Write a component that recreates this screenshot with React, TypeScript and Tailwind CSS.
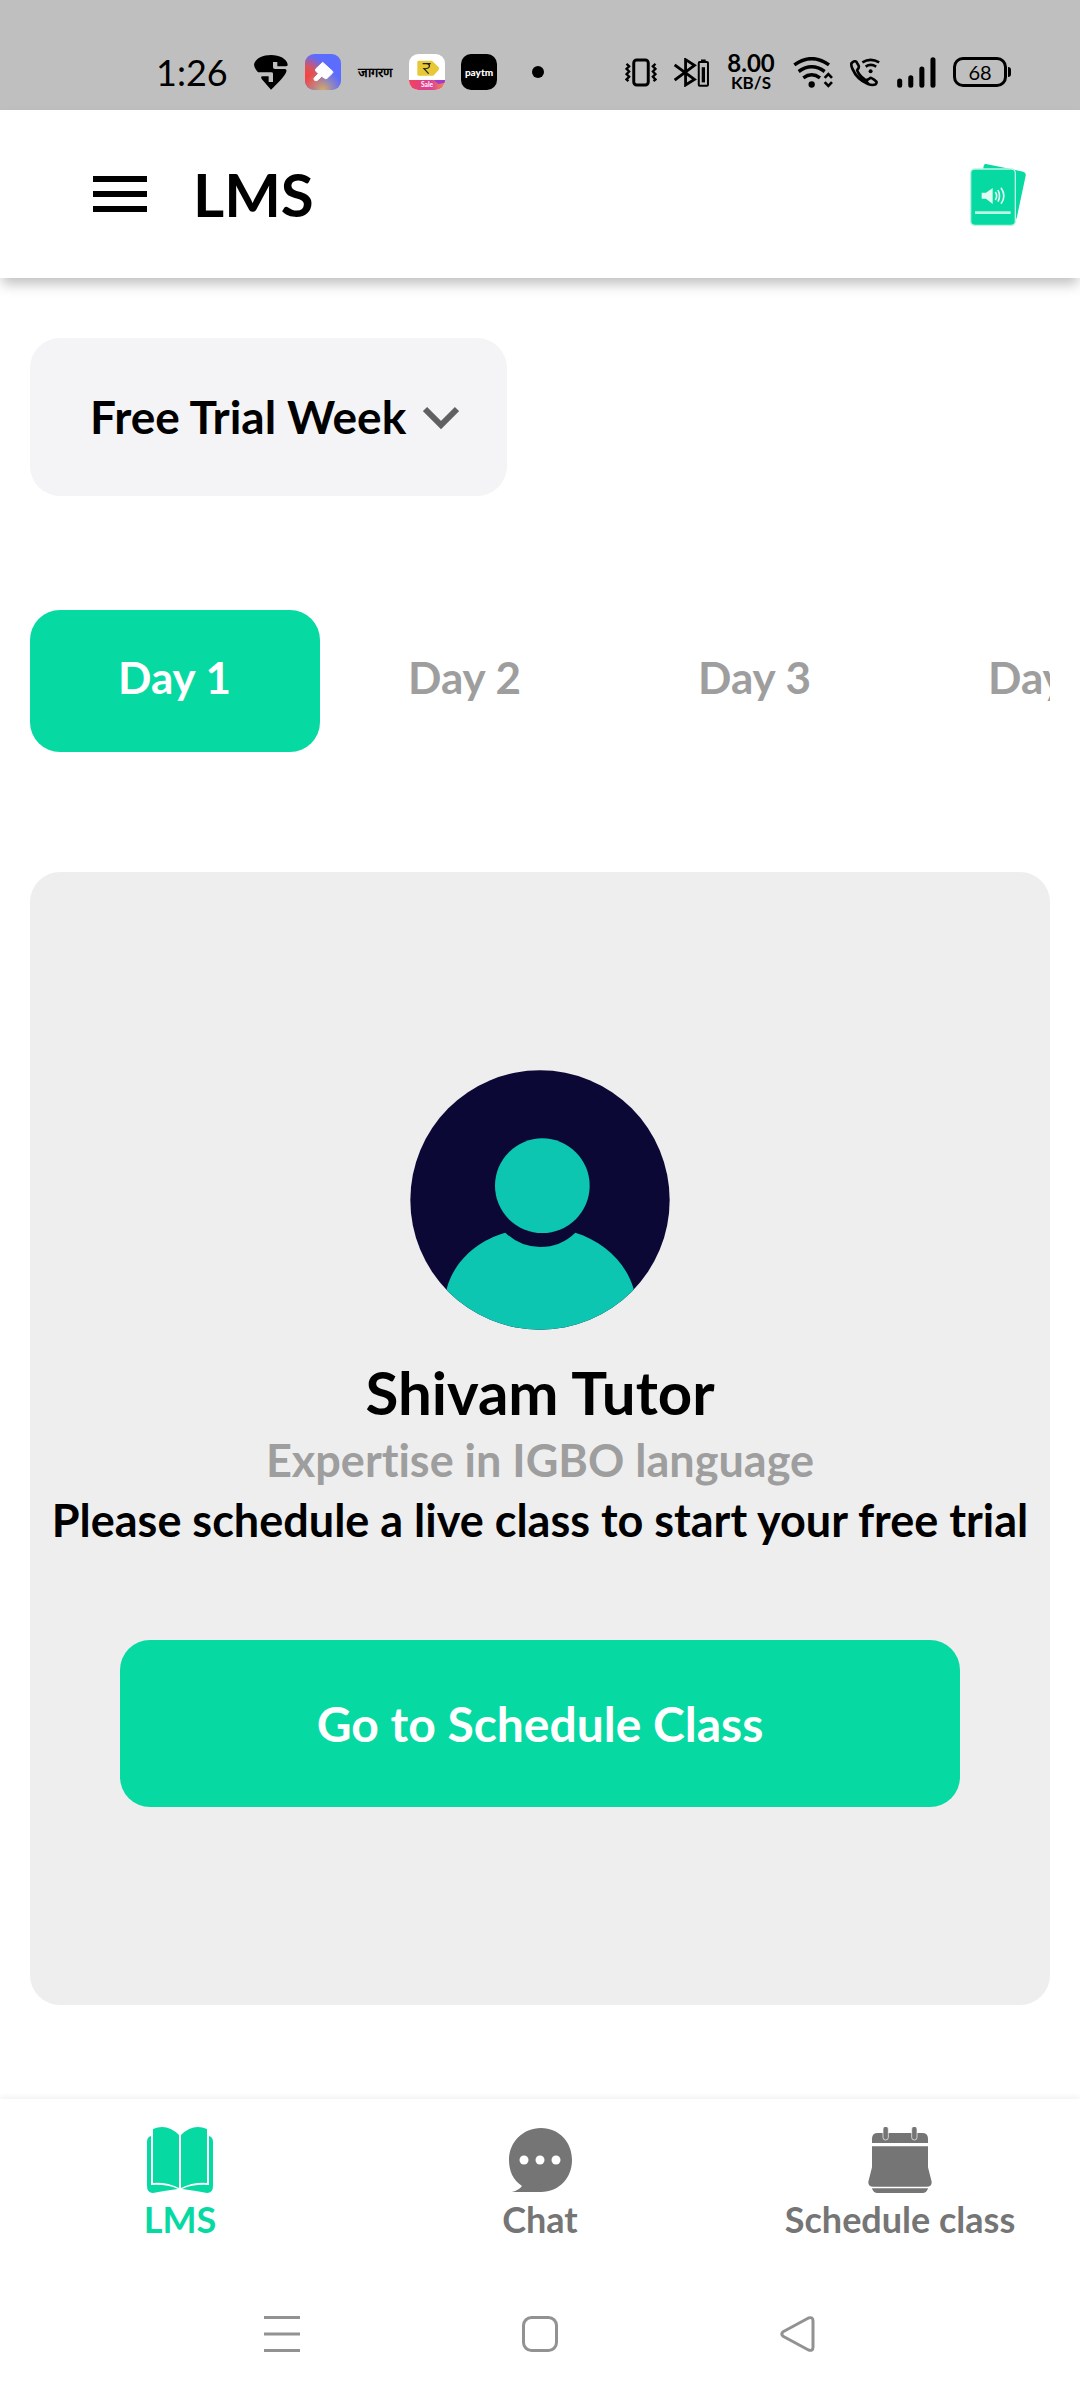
import React from "react";

function SwiggyIcon() {
  return (
    <svg viewBox="339 72 108 108" className="size-9" aria-hidden="true">
      <path d="M393 179 L365 147 Q361 139 367 139 H386 V156 H399 V131 Q399 127 394 127 H354 Q342 114 342 103 C347 84 370 75 393 75 C419 75 440 86 443 103 Q444 109 438 109 H412 V96 H399 V112 Q399 117 405 117 H434 Q441 118 439 125 C432 142 412 160 393 179Z" fill="#000" />
    </svg>
  );
}

function BrushIcon() {
  return (
    <svg viewBox="495 72 108 108" className="size-9" aria-hidden="true">
      <defs>
        <radialGradient id="brush-red" cx="0" cy="0.62" r="0.62">
          <stop offset="0" stopColor="#ff3d3d" />
          <stop offset="0.45" stopColor="#f0503f" stopOpacity="0.85" />
          <stop offset="1" stopColor="#f0503f" stopOpacity="0" />
        </radialGradient>
        <radialGradient id="brush-gold" cx="0.5" cy="1" r="0.55">
          <stop offset="0" stopColor="#d8ac62" />
          <stop offset="1" stopColor="#c59a80" stopOpacity="0" />
        </radialGradient>
      </defs>
      <rect x="495" y="72" width="108" height="108" rx="28" fill="#5b6cff" />
      <rect x="495" y="72" width="108" height="108" rx="28" fill="url(#brush-red)" />
      <rect x="495" y="72" width="108" height="108" rx="28" fill="url(#brush-gold)" />
      <path d="M548 97 L578 124 Q580 127 577 130 L561 145 Q557 148 553 144 L545 139 L532 151 Q526 154 522 149 Q521 146 523 143 L535 131 L528 124 Q525 120 528 116Z" fill="#fff" stroke="#fff" strokeWidth="3" strokeLinejoin="round" />
    </svg>
  );
}

function OfferIcon() {
  return (
    <svg viewBox="807 72 108 108" className="size-9" aria-hidden="true">
      <defs>
        <clipPath id="offer-clip"><rect x="807" y="72" width="108" height="108" rx="28" /></clipPath>
        <linearGradient id="offer-band" x1="0" x2="1">
          <stop offset="0" stopColor="#f0435c" />
          <stop offset="0.6" stopColor="#d8409a" />
          <stop offset="1" stopColor="#f58a4a" />
        </linearGradient>
      </defs>
      <g clipPath="url(#offer-clip)">
        <rect x="807" y="72" width="108" height="108" fill="#fff" />
        <path d="M836 92 H876 L896 112 Q898 116 896 120 L880 137 H836 Q832 137 832 133 V96 Q832 92 836 92Z" fill="#e6c838" />
        <path d="M848 101 H872 M862 101 Q870 104 868 110 Q866 117 852 116 L866 131" fill="none" stroke="#222" strokeWidth="3.5" />
        <rect x="807" y="150" width="108" height="30" fill="url(#offer-band)" />
        <path d="M882 150 h33 v8 l-20 4z" fill="#a03bd0" />
        <text x="861" y="171" textAnchor="middle" fontSize="20" fontWeight="700" fill="#fff" fontFamily="Lato, sans-serif">Sale</text>
      </g>
    </svg>
  );
}

function VibrateIcon() {
  return (
    <svg viewBox="80 82 96 88" className="h-[29px] w-8" fill="none" stroke="#000" aria-hidden="true">
      <rect x="106" y="88" width="44" height="76" rx="9" strokeWidth="9" />
      <path d="M84 100 l8 7 l-8 8 l8 8 l-8 8 l8 8 l-8 8 l6 5 M172 100 l-8 7 l8 8 l-8 8 l8 8 l-8 8 l8 8 l-6 5" strokeWidth="7" />
    </svg>
  );
}

function BluetoothIcon() {
  return (
    <svg viewBox="228 82 106 88" className="h-[29px] w-[35px]" fill="none" stroke="#000" aria-hidden="true">
      <path d="M230 103 L290 147 L263 164 V87 L290 104 L230 149" strokeWidth="8.5" />
      <rect x="303" y="94" width="28" height="72" rx="3" strokeWidth="6" />
      <path d="M310 90 h14" strokeWidth="7" />
      <path d="M317 110 v46" strokeWidth="10" />
    </svg>
  );
}

function WifiIcon() {
  return (
    <svg viewBox="586 80 120 92" className="h-[31px] w-10" fill="none" stroke="#000" aria-hidden="true">
      <path d="M590 103 Q642 66 694 103 M603 123 Q642 95 681 123 M617 142 Q642 124 667 142" strokeWidth="10.5" />
      <circle cx="642" cy="162" r="9.5" fill="#000" stroke="none" />
      <path d="M681 142 L692 131 L703 142 M681 155 L692 166 L703 155" strokeWidth="8" />
    </svg>
  );
}

function WifiCallIcon() {
  return (
    <svg viewBox="750 84 90 88" className="h-[29px] w-[30px]" fill="none" stroke="#000" aria-hidden="true">
      <path d="M754 100 Q764 90 769 96 L776 108 Q778 113 771 121 Q777 137 794 149 L801 151 L812 144 Q817 145 829 155 Q832 158 827 164 Q818 168 804 163 Q770 148 757 117 Q752 106 754 100Z M794 149 L806 163" strokeWidth="8" strokeLinejoin="round" />
      <path d="M787 97 Q812 82 838 97 M797 110 Q812 100 829 110" strokeWidth="8" />
      <circle cx="812" cy="124" r="6" fill="#000" stroke="none" />
    </svg>
  );
}

function SignalIcon() {
  return (
    <svg viewBox="890 80 116 92" className="h-[31px] w-[39px]" stroke="#000" strokeWidth="15" strokeLinecap="round" aria-hidden="true">
      <path d="M898 151 V164 M931 142 V164 M964 116 V164 M997 88 V164" />
    </svg>
  );
}

function StatusBar() {
  return (
    <header className="flex h-[110px] items-center justify-between bg-[#bfbfbf] pt-[34px] pr-[69px] pl-[156px] text-black">
      <div className="flex h-9 items-center gap-4">
        <time className="w-[81px] text-[36px] leading-9">1:26</time>
        <SwiggyIcon />
        <BrushIcon />
        <span lang="hi" className="flex w-9 justify-center text-[13px] leading-9 font-black">जागरण</span>
        <OfferIcon />
        <span className="flex size-9 items-center justify-center rounded-[10px] bg-black text-[10px] leading-3 font-black text-white">paytm</span>
        <span className="ml-[19px] size-3 rounded-full bg-black" />
      </div>
      <div className="flex h-9 items-center gap-[17px]">
        <VibrateIcon />
        <BluetoothIcon />
        <div className="flex w-[50px] flex-col items-center font-bold">
          <span className="text-[24px] leading-[21px]">8.00</span>
          <span className="text-[17px] leading-[19px]">KB/S</span>
        </div>
        <WifiIcon />
        <WifiCallIcon />
        <SignalIcon />
        <div className="flex items-center">
          <span className="flex h-[30px] w-[54px] items-center justify-center rounded-[10px] border-[3px] border-black text-[20px] leading-6">68</span>
          <span className="ml-px h-[10px] w-[3px] rounded-r bg-black" />
        </div>
      </div>
    </header>
  );
}

function AudioCardsIcon() {
  return (
    <svg viewBox="92 66 171 189" className="h-[63px] w-[57px]" aria-hidden="true">
      <path d="M140 69 L252 92 Q261 95 259 104 L231 236 L214 84 L132 84 Q132 68 140 69Z" fill="#07d9a2" />
      <rect x="94" y="84" width="134" height="169" rx="12" fill="#07d9a2" stroke="#b8f5e2" strokeWidth="4" />
      <path d="M127 155 h13 l20 -14 v48 l-20 -16 h-13z" fill="#dffbf2" />
      <path d="M168 153 Q176 165 168 177 M176 147 Q185 165 176 182 M185 140 Q202 165 185 188" fill="none" stroke="#dffbf2" strokeWidth="5" />
      <path d="M107 215 H214" stroke="#b8f5e2" strokeWidth="8" />
    </svg>
  );
}

function AppBar() {
  return (
    <div className="flex h-[168px] items-center bg-white pr-[53px] pl-[93px] shadow-[0_8px_12px_-2px_rgba(0,0,0,0.25)]">
      <button type="button" aria-label="Open menu" className="flex w-[54px] flex-col gap-[9px]">
        <span className="h-[6px] w-full bg-black" />
        <span className="h-[6px] w-full bg-black" />
        <span className="h-[6px] w-full bg-black" />
      </button>
      <h1 className="ml-[46px] text-[60px] leading-[76px] font-bold">LMS</h1>
      <button type="button" aria-label="Audio flashcards" className="ml-auto">
        <AudioCardsIcon />
      </button>
    </div>
  );
}

function WeekSelect() {
  return (
    <div className="relative self-start">
      <select aria-label="Week" className="h-[158px] w-[477px] appearance-none rounded-[30px] bg-[#f4f4f6] pr-[80px] pl-[60px] text-[46px] leading-[60px] font-bold text-black">
        <option>Free Trial Week</option>
      </select>
      <svg viewBox="0 0 36 24" className="pointer-events-none absolute top-[68px] right-[48px] h-6 w-9" fill="none" stroke="#606062" strokeWidth="6" aria-hidden="true">
        <path d="M2 3 L18 19 L34 3" />
      </svg>
    </div>
  );
}

const days = ["Day 1", "Day 2", "Day 3", "Day 4"];

function DayTabs() {
  return (
    <div role="tablist" className="mt-[114px] flex overflow-hidden">
      {days.map((day, i) => (
        <button
          key={day}
          type="button"
          role="tab"
          aria-selected={i === 0}
          className={
            i === 0
              ? "h-[142px] w-[290px] shrink-0 rounded-[30px] bg-[#07d9a2] pb-2 pl-[88px] text-left text-[44px] leading-[60px] font-bold text-white"
              : "h-[142px] w-[290px] shrink-0 rounded-[30px] pb-2 pl-[88px] text-left text-[44px] leading-[60px] font-bold text-[#9e9e9e]"
          }
        >
          {day}
        </button>
      ))}
    </div>
  );
}

function Avatar() {
  return (
    <svg viewBox="90 88 780 780" className="size-[260px]" role="img" aria-label="Tutor avatar">
      <defs>
        <clipPath id="avatar-clip"><circle cx="480" cy="478" r="389" /></clipPath>
      </defs>
      <g clipPath="url(#avatar-clip)">
        <rect x="90" y="88" width="780" height="780" fill="#0c0836" />
        <circle cx="487" cy="435" r="142" fill="#0dc6b1" />
        <path d="M200 745 C220 665 290 600 376 576 Q420 619 480 619 Q542 619 586 576 C670 602 738 665 761 745 V870 H200Z" fill="#0dc6b1" />
      </g>
    </svg>
  );
}

function TutorCard() {
  return (
    <section className="mt-[120px] flex flex-col items-center rounded-[30px] bg-[#eeeeee] py-[198px]">
      <Avatar />
      <h2 className="mt-6 text-[60px] leading-[76px] font-bold">Shivam Tutor</h2>
      <p className="text-[45px] leading-[60px] font-bold text-[#9e9e9e]">Expertise in IGBO language</p>
      <p className="text-center text-[45px] leading-[60px] font-bold whitespace-nowrap">Please schedule a live class to start your free trial</p>
      <div className="mt-[90px] flex w-full px-[90px]">
        <button type="button" className="h-[167px] flex-1 rounded-[30px] bg-[#07d9a2] text-[48px] leading-[60px] font-bold text-white">
          Go to Schedule Class
        </button>
      </div>
    </section>
  );
}

function BookIcon() {
  return (
    <svg viewBox="0 0 66 66" className="size-[66px]" fill="#07d9a2" aria-hidden="true">
      <path d="M4 9 V58 Q20 57 31 62 Q16 64 6 66 Q0 66 0 59 V15 Q0 10 4 9Z" />
      <path d="M62 9 V58 Q46 57 35 62 Q50 64 60 66 Q66 66 66 59 V15 Q66 10 62 9Z" />
      <path d="M6 2 Q20 -4 32 8 V61 Q20 55 6 56Z" />
      <path d="M60 2 Q46 -4 34 8 V61 Q46 55 60 56Z" />
    </svg>
  );
}

function ChatIcon() {
  return (
    <svg viewBox="0 0 66 66" className="size-[66px]" aria-hidden="true">
      <path d="M34 1 C52 1 65 15 65 33 C65 51 52 65 34 65 H5 Q12 63 15 59 C6 53 2 44 2 33 C2 15 16 1 34 1Z" fill="#757575" />
      <g fill="#fff">
        <circle cx="17" cy="33" r="4.5" />
        <circle cx="33" cy="33" r="4.5" />
        <circle cx="49" cy="33" r="4.5" />
      </g>
    </svg>
  );
}

function CalendarIcon() {
  return (
    <svg viewBox="381 141 198 198" className="size-[66px]" fill="#757575" aria-hidden="true">
      <path d="M396 189 V175 Q397 159 413 159 H547 Q563 159 564 175 V189Z" />
      <path d="M396 199 H564 V262 L575 305 Q576 320 560 320 H400 Q384 320 385 305 L396 262Z" />
      <path d="M396 325 H564 Q561 339 547 339 H413 Q399 339 396 325Z" />
      <rect x="429" y="139" width="16" height="41" rx="8" stroke="#fff" strokeWidth="2" />
      <rect x="515" y="139" width="16" height="41" rx="8" stroke="#fff" strokeWidth="2" />
    </svg>
  );
}

function BottomNav() {
  return (
    <nav className="mt-auto grid h-[169px] grid-cols-3 bg-white pt-7 text-[36px] leading-[44px] font-bold text-[#757575] shadow-[0_-2px_6px_rgba(0,0,0,0.06)]">
      <a href="#lms" aria-current="page" className="flex flex-col items-center gap-1 text-[#07d9a2]">
        <BookIcon />
        LMS
      </a>
      <a href="#chat" className="flex flex-col items-center gap-1">
        <ChatIcon />
        Chat
      </a>
      <a href="#schedule" className="flex flex-col items-center gap-1 whitespace-nowrap">
        <CalendarIcon />
        Schedule class
      </a>
    </nav>
  );
}

function SystemNav() {
  return (
    <div className="flex h-[132px] items-center justify-center gap-[222px] bg-white">
      <button type="button" aria-label="Recent apps">
        <svg viewBox="0 0 36 36" className="size-9" stroke="#929292" strokeWidth="3" aria-hidden="true">
          <path d="M0 1.5 H36 M0 18 H36 M0 34.5 H36" />
        </svg>
      </button>
      <button type="button" aria-label="Home">
        <svg viewBox="0 0 36 36" className="size-9" fill="none" stroke="#929292" strokeWidth="3" aria-hidden="true">
          <rect x="1.5" y="1.5" width="33" height="33" rx="8" />
        </svg>
      </button>
      <button type="button" aria-label="Back">
        <svg viewBox="0 0 36 36" className="size-9" fill="none" stroke="#929292" strokeWidth="3" strokeLinejoin="round" aria-hidden="true">
          <path d="M3.5 15.5 L28.5 2 Q33 0.5 33 5 V31 Q33 35.5 28.5 34 L3.5 20.5 Q0 18 3.5 15.5Z" />
        </svg>
      </button>
    </div>
  );
}

export default function App() {
  return (
    <div className="flex min-h-screen flex-col bg-white font-['Lato',sans-serif] text-black [font-variant-ligatures:none]">
      <StatusBar />
      <AppBar />
      <main className="flex flex-col px-[30px] pt-[60px] pb-[94px]">
        <WeekSelect />
        <DayTabs />
        <TutorCard />
      </main>
      <BottomNav />
      <SystemNav />
    </div>
  );
}
